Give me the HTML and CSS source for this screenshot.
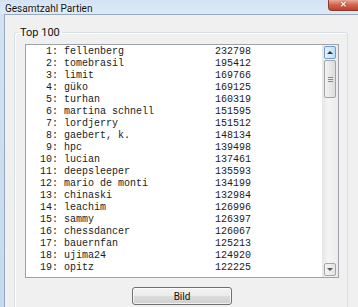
FILE: index.html
```
<!DOCTYPE html>
<html lang="de">
<head>
    <meta charset="UTF-8">
    <title>Gesamtzahl Partien</title>
    <link rel="stylesheet" href="styles.css">
</head>
<body>

    <div class="window">
        <div class="titlebar">
            <span class="title">Gesamtzahl Partien</span>
            <div class="close">&#x2715;</div>
        </div>

        <div class="client">
            <fieldset class="group">
                <legend>Top 100</legend>

                <div class="listbox">
                    <div class="rows">
                        <div class="row"><span class="idx">1:</span><span class="name">fellenberg</span><span class="score">232798</span></div>
                        <div class="row"><span class="idx">2:</span><span class="name">tomebrasil</span><span class="score">195412</span></div>
                        <div class="row"><span class="idx">3:</span><span class="name">limit</span><span class="score">169766</span></div>
                        <div class="row"><span class="idx">4:</span><span class="name">güko</span><span class="score">169125</span></div>
                        <div class="row"><span class="idx">5:</span><span class="name">turhan</span><span class="score">160319</span></div>
                        <div class="row"><span class="idx">6:</span><span class="name">martina schnell</span><span class="score">151595</span></div>
                        <div class="row"><span class="idx">7:</span><span class="name">lordjerry</span><span class="score">151512</span></div>
                        <div class="row"><span class="idx">8:</span><span class="name">gaebert, k.</span><span class="score">148134</span></div>
                        <div class="row"><span class="idx">9:</span><span class="name">hpc</span><span class="score">139498</span></div>
                        <div class="row"><span class="idx">10:</span><span class="name">lucian</span><span class="score">137461</span></div>
                        <div class="row"><span class="idx">11:</span><span class="name">deepsleeper</span><span class="score">135593</span></div>
                        <div class="row"><span class="idx">12:</span><span class="name">mario de monti</span><span class="score">134199</span></div>
                        <div class="row"><span class="idx">13:</span><span class="name">chinaski</span><span class="score">132984</span></div>
                        <div class="row"><span class="idx">14:</span><span class="name">leachim</span><span class="score">126996</span></div>
                        <div class="row"><span class="idx">15:</span><span class="name">sammy</span><span class="score">126397</span></div>
                        <div class="row"><span class="idx">16:</span><span class="name">chessdancer</span><span class="score">126067</span></div>
                        <div class="row"><span class="idx">17:</span><span class="name">bauernfan</span><span class="score">125213</span></div>
                        <div class="row"><span class="idx">18:</span><span class="name">ujima24</span><span class="score">124920</span></div>
                        <div class="row"><span class="idx">19:</span><span class="name">opitz</span><span class="score">122225</span></div>
                    </div>

                    <div class="scrollbar">
                        <div class="sb-btn sb-up"><span class="arrow-up"></span></div>
                        <div class="sb-thumb"><span class="grip"></span></div>
                        <div class="sb-track"></div>
                        <div class="sb-btn sb-down"><span class="arrow-down"></span></div>
                    </div>
                </div>

                <div class="actions">
                    <button>Bild</button>
                </div>
            </fieldset>
        </div>
    </div>

</body>
</html>
```

FILE: styles.css
```
* {
    box-sizing: border-box;
}

body {
    margin: 0;
    width: 358px;
    height: 307px;
    overflow: hidden;
    font-family: Roboto, 'Liberation Sans', sans-serif;
    color: #000;
}

.window {
    display: flex;
    flex-direction: column;
    height: 100%;
    background: linear-gradient(to bottom, #c9dbef, #d3e2f3 20px, #c6d9ee);
}

/* title bar */
.titlebar {
    height: 17px;
    display: flex;
    align-items: flex-start;
    background: linear-gradient(to bottom, #d4e3f4, #dde9f6);
}

.title {
    padding: 3px 0 0 5px;
    font-size: 10px;
    line-height: 11px;
    color: #111;
    text-shadow: 0 0 3px rgba(255, 255, 255, 0.9);
}

.close {
    margin-left: auto;
    width: 30px;
    height: 11px;
    border: 1px solid #8d3a2d;
    border-top: none;
    border-right: none;
    border-radius: 0 0 0 4px;
    background: linear-gradient(to bottom, #e9a99a, #d0634b 50%, #c0412a);
    color: #fff;
    font-size: 8px;
    line-height: 10px;
    font-weight: bold;
    text-align: center;
    text-shadow: 0 0 2px #6a1e12;
}

/* client area */
.client {
    flex: 1;
    margin-left: 4px;
    border-top: 1px solid #98a9bd;
    border-left: 1px solid #98a9bd;
    background: #f0f0f0;
    padding: 11px 0 0 9px;
}

.group {
    width: 334px;
    margin: 0;
    padding: 0 8px 40px 10px;
    border: 1px solid #d5dfe5;
    border-radius: 3px;
    box-shadow: inset 1px 1px 0 #fff;
}

.group legend {
    margin-left: -7px;
    padding: 0 2px;
    font-size: 11px;
    line-height: 13px;
    color: #111;
}

/* list box */
.listbox {
    display: flex;
    margin-top: 5px;
    width: 314px;
    height: 234px;
    border: 1px solid #9ea3aa;
    background: #fff;
}

.rows {
    flex: 1;
    padding-top: 1px;
    font-family: 'Liberation Mono', 'Courier New', monospace;
    font-size: 10px;
    color: #1b1b1b;
}

.row {
    display: flex;
    height: 12px;
    line-height: 12px;
    white-space: pre;
}

.idx {
    width: 32px;
    text-align: right;
}

.name {
    width: 157px;
    padding-left: 6px;
}

/* scroll bar */
.scrollbar {
    width: 16px;
    display: flex;
    flex-direction: column;
    padding: 1px 2px 1px 2px;
    background: linear-gradient(to right, #e6e6e6, #f4f4f4 40%, #ececec);
}

.sb-btn {
    height: 13px;
    border: 1px solid #a5a5a5;
    border-radius: 2px;
    background: linear-gradient(to right, #f4f4f4, #e2e2e2);
    display: flex;
    align-items: center;
    justify-content: center;
}

.sb-up {
    border-color: #6e9cc6;
    background: linear-gradient(to right, #e6f2fc, #bcdcf4);
}

.arrow-up {
    width: 0;
    height: 0;
    border-left: 3px solid transparent;
    border-right: 3px solid transparent;
    border-bottom: 3px solid #1d3c5a;
}

.arrow-down {
    width: 0;
    height: 0;
    border-left: 3px solid transparent;
    border-right: 3px solid transparent;
    border-top: 3px solid #555;
}

.sb-thumb {
    height: 38px;
    margin-top: 1px;
    border: 1px solid #a3a3a3;
    border-radius: 2px;
    background: linear-gradient(to right, #f3f3f3, #dcdcdc);
    display: flex;
    align-items: center;
    justify-content: center;
}

.grip {
    width: 5px;
    height: 5px;
    border-top: 1px solid #8a8a8a;
    border-bottom: 1px solid #8a8a8a;
    background: linear-gradient(to bottom, transparent 1px, #8a8a8a 1px, #8a8a8a 2px, transparent 2px);
}

.sb-track {
    flex: 1;
}

/* button row */
.actions {
    display: flex;
    justify-content: center;
    padding-top: 9px;
}

button {
    width: 100px;
    height: 18px;
    padding: 0;
    border: 1px solid #707070;
    border-radius: 3px;
    background: linear-gradient(to bottom, #f2f2f2, #ebebeb 50%, #dddddd 50%, #cfcfcf);
    box-shadow: inset 0 0 0 1px rgba(255, 255, 255, 0.7);
    font-family: Roboto, 'Liberation Sans', sans-serif;
    font-size: 10px;
    color: #111;
}
```
